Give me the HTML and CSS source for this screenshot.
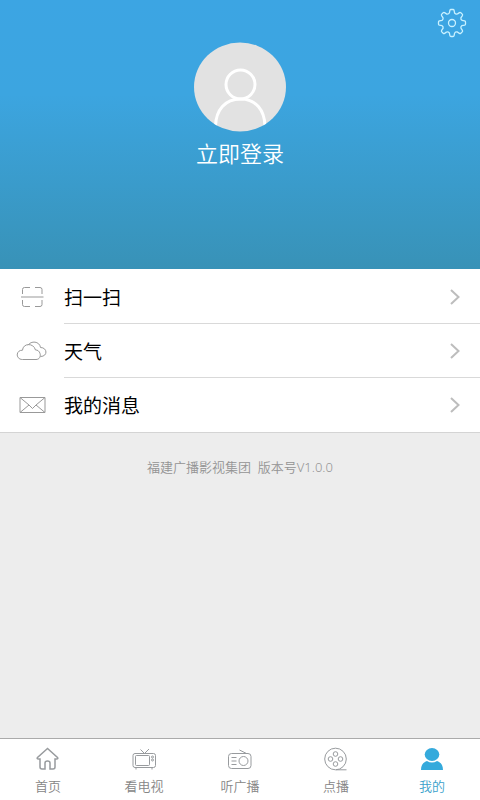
FILE: index.html
```html
<!DOCTYPE html>
<html lang="zh-CN">
<head>
<meta charset="utf-8">
<meta name="viewport" content="width=device-width, initial-scale=1">
<title>我的</title>
<link rel="stylesheet" href="styles.css">
</head>
<body>
<header class="profile">
  <button class="settings" aria-label="设置">
    <svg width="30" height="30" viewBox="-15 -15 30 30">
      <defs><path id="tooth" d="M-2.6-10 L-2.1-12.6 Q-1.9-13.5-1-13.5 H1 Q1.9-13.5 2.1-12.6 L2.6-10 Q3.8-8.5 5.2-8.9"/></defs>
      <use href="#tooth"/>
      <use href="#tooth" transform="rotate(45)"/>
      <use href="#tooth" transform="rotate(90)"/>
      <use href="#tooth" transform="rotate(135)"/>
      <use href="#tooth" transform="rotate(180)"/>
      <use href="#tooth" transform="rotate(225)"/>
      <use href="#tooth" transform="rotate(270)"/>
      <use href="#tooth" transform="rotate(315)"/>
      <circle r="3.5"/>
    </svg>
  </button>
  <button class="login">
    <svg class="avatar" width="92" height="90" viewBox="0 0 92 90">
      <defs><clipPath id="disc"><ellipse cx="46" cy="45" rx="46" ry="44.5"/></clipPath></defs>
      <ellipse cx="46" cy="45" rx="46" ry="44.5" fill="#e2e2e2"/>
      <g clip-path="url(#disc)" fill="none" stroke="#fff" stroke-width="3">
        <circle cx="46.500" cy="42.500" r="14.500"/>
        <path d="M21.500 84C22 68 31 57 46.500 57S70.500 68 71 84"/>
      </g>
    </svg>
    <span>立即登录</span>
  </button>
</header>

<main>
  <ul class="menu">
    <li><a class="item" href="#scan">
      <svg class="icon" width="32" height="24" viewBox="0 0 32 24">
        <path d="M6.500 9V4.500q0-2 2-2H14M19 2.500h5q2 0 2 2V9M6.500 15v4.500q0 2 2 2H14M19 21.500h5q2 0 2-2V15M5 12h22.500"/>
      </svg>
      <span class="label">扫一扫</span>
      <svg class="arrow" width="12" height="18" viewBox="0 0 12 18"><path d="M2 2l7.500 7L2 16"/></svg>
    </a></li>
    <li><a class="item" href="#weather">
      <svg class="icon" width="32" height="24" viewBox="0 0 32 24">
        <path d="M6.500 20.500C-.5 20.500-.5 11 6.500 11.200C7 4 17.500 3.500 19.500 11C25 10.500 26.500 20.500 20 20.500Z"/>
        <path d="M12 6.200C15 1.500 23.500 2 24.500 8.500C31.500 8.500 32 17.500 24.500 17.500"/>
      </svg>
      <span class="label">天气</span>
      <svg class="arrow" width="12" height="18" viewBox="0 0 12 18"><path d="M2 2l7.500 7L2 16"/></svg>
    </a></li>
    <li><a class="item" href="#messages">
      <svg class="icon" width="32" height="24" viewBox="0 0 32 24">
        <path d="M4 4.500h25v15H4zM4 4.500l9 7.500 3.500 3.500L20 12l9-7.500M4 19.500l9-7.500M29 19.500L20 12"/>
      </svg>
      <span class="label">我的消息</span>
      <svg class="arrow" width="12" height="18" viewBox="0 0 12 18"><path d="M2 2l7.500 7L2 16"/></svg>
    </a></li>
  </ul>
  <p class="version">福建广播影视集团&nbsp; 版本号V1.0.0</p>
</main>

<nav class="tabs">
  <a class="tab" href="#home">
    <svg width="28" height="28" viewBox="0 0 28 28"><path stroke-width="1.500" d="M13.500 3.500L3.500 12.500q-1 1.500 1 1.500H6v8q0 2 2 2h3v-6q0-2 2.500-2t2.500 2v6h3q2 0 2-2v-8h1.500q2 0 1-1.500Z"/></svg>
    <span>首页</span>
  </a>
  <a class="tab" href="#tv">
    <svg width="28" height="28" viewBox="0 0 28 28"><rect x="3" y="8.500" width="22.500" height="14" rx="2"/><rect x="5.500" y="10.500" width="14" height="10" rx="1"/><path d="M10.500 4.500l4 4 4.500-4.500M6 22.500v2M22 22.500v2"/><circle cx="22.500" cy="12" r="1"/><circle cx="22.500" cy="15" r="1"/></svg>
    <span>看电视</span>
  </a>
  <a class="tab" href="#radio">
    <svg width="28" height="28" viewBox="0 0 28 28"><rect x="2.500" y="8.500" width="22.500" height="15" rx="3"/><circle cx="17.500" cy="16" r="4.500"/><path d="M13.500 5l7 3.500M5.500 12.500h5M5.500 16h5M5.500 19.500h5"/></svg>
    <span>听广播</span>
  </a>
  <a class="tab" href="#vod">
    <svg width="28" height="28" viewBox="0 0 28 28"><circle cx="13.500" cy="14" r="10.800"/><circle cx="13.500" cy="9" r="2.300"/><circle cx="13.500" cy="19" r="2.300"/><circle cx="8.500" cy="14" r="2.300"/><circle cx="18.500" cy="14" r="2.300"/><path d="M14 24.800h10.500"/></svg>
    <span>点播</span>
  </a>
  <a class="tab active" href="#me" aria-current="page">
    <svg width="28" height="28" viewBox="0 0 28 28"><ellipse cx="14" cy="9.500" rx="7.300" ry="6.500"/><path d="M3 25C3 20 5.500 17 9 16q5 3 10 0c3.500 1 6 4 6 9Z"/></svg>
    <span>我的</span>
  </a>
</nav>
</body>
</html>
```

FILE: styles.css
```css
* { box-sizing: border-box; }

body {
  margin: 0;
  min-height: 100vh;
  display: flex;
  flex-direction: column;
  background: #ededed;
  font-family: "Noto Sans", "Noto Sans CJK SC", sans-serif;
}

button {
  border: 0;
  padding: 0;
  background: none;
  font: inherit;
  color: inherit;
  cursor: pointer;
}

a { color: inherit; text-decoration: none; }

svg { display: block; fill: none; }

.profile {
  position: relative;
  display: flex;
  justify-content: center;
  align-items: flex-start;
  padding: 42px 0 100px;
  background: linear-gradient(#3ca5e3 0%, #3ca5e0 35%, #3892b7 100%);
  color: #fff;
}

.settings {
  position: absolute;
  top: 8px;
  right: 13px;
}

.settings svg {
  stroke: #c9f1ff;
  stroke-width: 1.3;
}

.login {
  display: flex;
  flex-direction: column;
  align-items: center;
  gap: 4px;
  font-family: "Noto Sans CJK SC", sans-serif;
  font-size: 22px;
  line-height: 33px;
  font-weight: 350;
}

.menu {
  margin: 0;
  padding: 1px 0 0;
  list-style: none;
  background: #fff;
  border-bottom: 1px solid #d4d4d4;
}

.item {
  position: relative;
  display: flex;
  align-items: center;
  padding-left: 16px;
}

.menu li:not(:last-child) .item::after {
  content: "";
  position: absolute;
  bottom: 0;
  left: 64px;
  right: 0;
  border-bottom: 1px solid #d9d9d9;
}

.icon {
  flex: none;
  margin-right: 16px;
  stroke: #999;
  stroke-width: 1;
}

.label {
  flex: 1;
  font-size: 19px;
  line-height: 54px;
  color: #000;
  font-family: "Noto Sans CJK SC", sans-serif;
}

.arrow {
  margin-right: 19px;
  stroke: #bdbdbd;
  stroke-width: 2;
}

.version {
  margin: 24px 0 0;
  text-align: center;
  font-size: 13px;
  line-height: 20px;
  font-weight: 350;
  color: #949494;
}

.tabs {
  display: grid;
  grid-template-columns: repeat(5, 1fr);
  margin-top: auto;
  border-top: 1px solid #aaa;
  background: #fff;
}

.tab {
  display: flex;
  flex-direction: column;
  align-items: center;
  gap: 3px;
  padding: 6px 0 4px;
  font-size: 13px;
  line-height: 20px;
  font-weight: 350;
  color: #858585;
}

.tab svg { stroke: #989b9e; stroke-width: 1; }

.tab.active { color: #3a9fcb; }

.tab.active svg { fill: #35aadc; stroke: none; }
```
